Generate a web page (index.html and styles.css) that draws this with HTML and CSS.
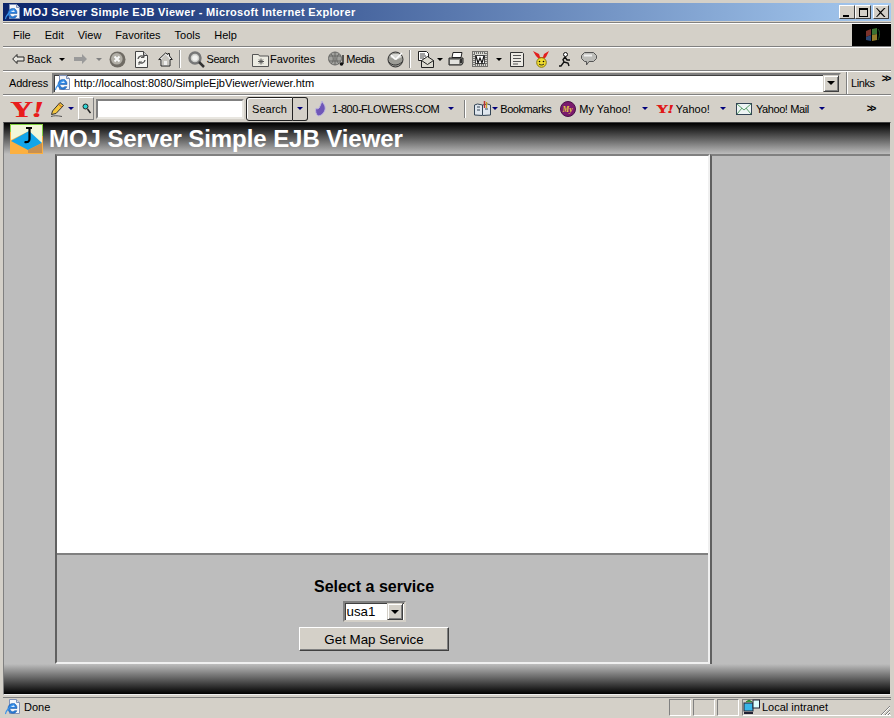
FILE: index.html
```html
<!doctype html>
<html lang="en">
<head>
<meta charset="utf-8">
<title>MOJ Server Simple EJB Viewer - Microsoft Internet Explorer</title>
<link rel="stylesheet" href="styles.css">
</head>
<body>
<svg class="defs" width="0" height="0">
  <symbol id="ie" viewBox="0 0 16 16">
    <path d="M4.500.5h7l3 3v11h-10z" fill="#f4f6fa" stroke="#8092b8"/>
    <path d="M11.500.5v3h3" fill="#cfd8e8" stroke="#8092b8"/>
    <path d="M3 9.500h9c.3-3-1.600-5-4.300-5C5 4.500 3 6.700 3 9.500c0 2.800 2 4.800 4.800 4.800 2 0 3.400-.9 4.100-2.600H9.500c-.4.700-1 1-1.800 1-1.300 0-2.200-.9-2.300-2.200" fill="#2a7fdc" stroke="#17509c" stroke-width=".5"/>
    <path d="M5.400 8h4.400c-.1-1.200-1-2-2.200-2s-2 .8-2.200 2z" fill="#dcecff"/>
    <path d="M.8 15c-1-1.500 3-7 9-10.500" fill="none" stroke="#3a93ea" stroke-width="1.200"/>
  </symbol>
</svg>
<div class="window">
  <div class="titlebar">
    <svg class="ic16" width="16" height="16"><use href="#ie"/></svg>
    <span class="title">MOJ Server Simple EJB Viewer - Microsoft Internet Explorer</span>
    <span class="caps">
      <span class="cap"><i class="cap-min"></i></span><span class="cap"><i class="cap-max"></i></span><span class="cap cap-close"><svg width="10" height="9"><path d="M1 0l3.500 3.500L8 0h1.500L5.300 4.500 9.500 9H8L4.500 5.500 1 9H0l3.700-4.500L0 0z" fill="#000"/></svg></span>
    </span>
  </div>

  <div class="bar menubar">
    <div class="menu">
      <span>File</span><span>Edit</span><span>View</span><span>Favorites</span><span>Tools</span><span>Help</span>
    </div>
    <div class="flag">
      <svg class="flag-mark" width="18" height="16"><path d="M3 4l5-2v6l-5 2z" fill="#a5433a"/><path d="M3 10l5-2v6l-5-1z" fill="#3b5f9c"/><path d="M9 2l5-1v6l-5 1z" fill="#4f9a45"/><path d="M9 8l5-1v6l-5 1z" fill="#c9a93a"/><path d="M15 2c2 2 2 7 0 11" fill="none" stroke="#2c6a30"/></svg>
    </div>
  </div>

  <div class="bar toolbar">
    <svg class="i" style="margin-left:9px" width="13" height="10"><path d="M5 .5L.7 5 5 9.500V7h7V3H5z" fill="#e8e6e0" stroke="#222"/></svg>
    <span class="lbl" style="margin-left:2px">Back</span>
    <i class="drop" style="margin-left:8px"></i>
    <svg class="i" style="margin-left:9px" width="13" height="10"><path d="M8 0l5 5-5 5V7H0V3h8z" fill="#9a9a9a"/></svg>
    <i class="drop drop-off" style="margin-left:9px"></i>
    <svg class="i" style="margin-left:7px" width="17" height="17"><circle cx="8.500" cy="8.500" r="8" fill="#6f6b64"/><circle cx="7.800" cy="7.800" r="5.800" fill="#b3b0a8"/><path d="M5.500 5.500l5 5m0-5l-5 5" stroke="#f8f8f8" stroke-width="2"/></svg>
    <svg class="i" style="margin-left:8px" width="15" height="17"><path d="M1.500.5h8l4 4v12h-12z" fill="#f5f5f2" stroke="#444"/><path d="M9.500.5v4h4" fill="#ccc" stroke="#444"/><path d="M4 8a3.500 3.500 0 016-2m1 3a3.500 3.500 0 01-6 2" fill="none" stroke="#555" stroke-width="1.300"/><path d="M10 3.500v3H7M5 14v-3h3" fill="none" stroke="#555"/></svg>
    <svg class="i" style="margin-left:9px" width="15" height="15"><path d="M7.500 1L.7 7.500h2.300v6.500h9V7.500h2.300L11.500 4V1.500H10V2.500z" fill="#eee" stroke="#222"/><path d="M7.500 2.500L4 6v7h2V9h3v4h2V6z" fill="#c8c6c0"/></svg>
    <i class="sep" style="margin-left:6px"></i>
    <svg class="i" style="margin-left:7px" width="17" height="17"><circle cx="7" cy="7" r="5.500" fill="#cfd0cc" stroke="#777" stroke-width="2.400"/><circle cx="7" cy="7" r="2.800" fill="#f2f2f0"/><path d="M11 11l5 5" stroke="#333" stroke-width="2.500"/></svg>
    <span class="lbl tight" style="margin-left:1px">Search</span>
    <svg class="i" style="margin-left:13px" width="17" height="15"><path d="M.5 2.500h6l1 1.500h9v10.500H.5z" fill="#ecebe2" stroke="#555"/><path d="M9 6.500v6M6 9.500h6M7 7.500l4 4m0-4l-4 4" stroke="#555"/></svg>
    <span class="lbl" style="margin-left:1px">Favorites</span>
    <svg class="i" style="margin-left:13px" width="17" height="17"><circle cx="7" cy="7.500" r="6.500" fill="#a2a29e" stroke="#6a6a68"/><path d="M1 5h12M1 10h12M7 1v13M3 3c3 3 3 7 0 10M11 3c-3 3-3 7 0 10" fill="none" stroke="#5e5e5c" stroke-width=".8"/><path d="M15 4v9" stroke="#111" stroke-width="1.300"/><circle cx="13.500" cy="13" r="1.800" fill="#111"/></svg>
    <span class="lbl tight" style="margin-left:1px">Media</span>
    <svg class="i" style="margin-left:13px" width="17" height="17"><circle cx="8.500" cy="8.500" r="7.500" fill="#9c9c96" stroke="#333"/><path d="M3 6l3-3 6 0 3 3-6 3z" fill="#d8d8d4"/><path d="M8.500 8.500L4 4M8.500 8.500L15 2" stroke="#fff" stroke-width="1.500"/><path d="M2 11c3 4 9 4 13 0" stroke="#333" fill="none"/></svg>
    <i class="sep" style="margin-left:5px"></i>
    <svg class="i" style="margin-left:6px" width="18" height="17"><path d="M1.500.5h8l2 2v7h-10z" fill="#fff" stroke="#222"/><path d="M3 3h5M3 5h6M3 7h4" stroke="#444"/><path d="M4.500 16.500v-7l6-4 6 4v7z" fill="#dcdad0" stroke="#222"/><path d="M4.500 9.500l6 4 6-4" fill="none" stroke="#222"/></svg>
    <i class="drop" style="margin-left:2px"></i>
    <svg class="i" style="margin-left:5px" width="16" height="14"><path d="M5 .5h9l-1 5H4z" fill="#fff" stroke="#222"/><path d="M1 6h14v5l-1.500 2H1z" fill="#8e8e8a" stroke="#222"/><path d="M2 8h9v4H2z" fill="#e2e2de"/><path d="M13 7v4" stroke="#111" stroke-width="1.500"/></svg>
    <svg class="i" style="margin-left:8px" width="16" height="16"><rect x=".5" y=".5" width="15" height="15" fill="#d8d8d2" stroke="#111" stroke-dasharray="1 1"/><rect x="2" y="2" width="12" height="12" fill="none" stroke="#111" stroke-dasharray="1 1"/><rect x="3.500" y="4.500" width="9" height="8" fill="#fff" stroke="#444"/><path d="M4 5l2 7 2-5 2 5 2-7" fill="none" stroke="#111" stroke-width="1.200"/></svg>
    <i class="drop" style="margin-left:8px"></i>
    <svg class="i" style="margin-left:8px" width="14" height="15"><path d="M.5.500h12l1 1v13H.5z" fill="#eceae4" stroke="#333"/><path d="M3 3.500h8M3 6.500h8M3 9.500h8M3 12h5" stroke="#555"/></svg>
    <svg class="i" style="margin-left:9px" width="16" height="17"><path d="M0 0l6 3 1 3h3l1-3 5-3-3 6-2 2-5 0-3-3z" fill="#e31f1f"/><circle cx="8.500" cy="11.500" r="4.800" fill="#f0dc2e" stroke="#8a7a10"/><circle cx="6.500" cy="10.500" r=".8"/><circle cx="10.500" cy="10.500" r=".8"/><path d="M6 13c1.500 1.300 3.500 1.300 5 0" fill="none" stroke="#222"/></svg>
    <svg class="i" style="margin-left:10px" width="12" height="15"><circle cx="6.500" cy="2.500" r="2" fill="#fff" stroke="#111"/><path d="M6 5L4 7.500 5 10l-3 4h-2M6 5l2 3 3 0M5 10l4 1 1 3" fill="none" stroke="#111" stroke-width="1.400"/></svg>
    <svg class="i" style="margin-left:10px" width="16" height="14"><path d="M.5 3.500l3-3h9l3 3v3l-3 3H8L5.500 13V9.500H3.500l-3-3z" fill="#bdbdb9" stroke="#555"/><path d="M3 3.500h8" stroke="#eee" stroke-width="2"/></svg>
  </div>

  <div class="bar addressbar">
    <span class="lbl addr-lbl">Address</span>
    <div class="addr-box">
      <svg class="ic16" width="16" height="16"><use href="#ie"/></svg>
      <span class="url">http://localhost:8080/SimpleEjbViewer/viewer.htm</span>
      <span class="combo-btn"><i class="combo-arrow"></i></span>
    </div>
    <div class="links"><span class="lbl tight">Links</span><span class="chev chev-up">&gt;&gt;</span></div>
  </div>

  <div class="bar yahoobar">
    <span class="y-logo">Y<em>!</em></span>
    <svg class="i" style="margin-left:8px" width="14" height="16"><path d="M2.500 10L10 1.500l3.500 3L6 12.500l-4.500 1z" fill="#f4c63e" stroke="#333"/><path d="M8.500 3.200l3.500 3" stroke="#c05a20"/><path d="M1 15.500c3-1 6-1 11 0" fill="none" stroke="#555"/></svg>
    <i class="drop drop-blue" style="margin-left:4px"></i>
    <span class="y-find"><svg width="9" height="11"><circle cx="3.500" cy="3.500" r="2.500" fill="#2fd4d4" stroke="#222"/><path d="M5.500 6l3 4" stroke="#222" stroke-width="1.500"/></svg></span>
    <div class="y-input"></div>
    <span class="y-search">Search</span>
    <span class="y-split"><i class="drop drop-blue"></i></span>
    <svg class="i" style="margin-left:5px" width="15" height="17"><path d="M9 1c1 3 4 4 3 9-1 3-4 6-7 6-2-2-3-4-2-8 1 1 2 1 3 0 1-2 2-4 3-7z" fill="#6f57b8" stroke="#c0b8e0"/></svg>
    <span class="lbl caps-tight" style="margin-left:4px">1-800-FLOWERS.COM</span>
    <i class="drop drop-blue" style="margin-left:9px"></i>
    <i class="sep" style="margin-left:10px"></i>
    <svg class="i" style="margin-left:8px" width="17" height="15"><path d="M.5 4l3-1 5 1 5-1 3 1v10l-8 .5-8-.5z" fill="#dfe6ee" stroke="#345"/><path d="M8.500 4v10M3 6h3M3 9h3M11 8h3" stroke="#345"/><path d="M10.500 0v7" stroke="#b33" stroke-width="1.500"/><path d="M12.500 1v6" stroke="#c89a20" stroke-width="1.300"/></svg>
    <i class="drop drop-blue" style="margin-left:1px"></i>
    <span class="lbl caps-tight" style="margin-left:2px">Bookmarks</span>
    <svg class="i" style="margin-left:9px" width="16" height="16"><circle cx="8" cy="8" r="7.500" fill="#7a1a6e" stroke="#4a1048"/><text class="my" x="2.500" y="11">My</text></svg>
    <span class="lbl" style="margin-left:3px">My Yahoo!</span>
    <i class="drop drop-blue" style="margin-left:11px"></i>
    <span class="y-mini" style="margin-left:8px">Y<em>!</em></span>
    <span class="lbl" style="margin-left:4px">Yahoo!</span>
    <i class="drop drop-blue" style="margin-left:10px"></i>
    <svg class="i" style="margin-left:10px" width="16" height="12"><rect x=".5" y=".5" width="15" height="11" fill="#eef4f4" stroke="#345"/><path d="M1 1l7 6 7-6M1 11l5-6m9 6l-5-6" fill="none" stroke="#5aa06a"/></svg>
    <span class="lbl tight" style="margin-left:4px">Yahoo! Mail</span>
    <i class="drop drop-blue" style="margin-left:10px"></i>
    <span class="chev chev-end">&gt;&gt;</span>
  </div>

  <div class="page">
    <div class="banner">
      <svg class="moj" width="33" height="30">
        <rect width="33" height="30" fill="#fcb040"/>
        <path d="M1 1h31v18L17 8 1 16z" fill="#f2f6d8"/>
        <path d="M1 17L19 7l13 12-14 7z" fill="#12a5ea"/>
        <path d="M18 26l14-7v10H18z" fill="#c89050"/>
        <path d="M16 4h6M19.500 4v11c0 3-2 3.500-5 3" fill="none" stroke="#000" stroke-width="2.200"/>
        <path d="M.5 8V.5h32V12" fill="none" stroke="#7fd040"/>
      </svg>
      <span class="heading">MOJ Server Simple EJB Viewer</span>
    </div>
    <div class="frames">
      <div class="side"></div>
      <div class="main">
        <div class="map"></div>
        <div class="form">
          <div class="select-title">Select a service</div>
          <div class="select"><span class="select-val">usa1</span><span class="combo-btn"><i class="combo-arrow"></i></span></div>
          <div class="go">Get Map Service</div>
        </div>
      </div>
      <div class="right"></div>
    </div>
    <div class="footer"></div>
  </div>

  <div class="status">
    <svg class="ic16" width="16" height="16"><use href="#ie"/></svg>
    <span class="lbl done">Done</span>
    <span class="cell"></span><span class="cell"></span><span class="cell"></span>
    <span class="cell zone">
      <svg class="ic16" width="17" height="16"><rect x="1" y="4" width="9" height="8" fill="#39b6e8" stroke="#223"/><rect x="10" y="1" width="6.500" height="8" fill="#dff" stroke="#223"/><path d="M1 14h9" stroke="#223" stroke-width="2"/><path d="M3 3l3-2 3 2" fill="#3a9a3a" stroke="#2a7a2a"/></svg>
      <span class="lbl">Local intranet</span>
    </span>
    <svg class="grip" width="11" height="11"><path d="M10 1L1 10M10 5l-5 5M10 8l-2 2" stroke="#808080"/><path d="M10 2l-8 8M10 6l-4 4M10 9l-1 1" stroke="#fff"/></svg>
  </div>
</div>
</body>
</html>
```

FILE: styles.css
```css
* { box-sizing: border-box; }
html, body { margin: 0; height: 100%; }
body {
  background: #d4d0c8;
  font-family: "Liberation Sans", Arial, sans-serif;
  font-size: 11px;
  color: #000;
  overflow: hidden;
}
.defs { position: absolute; }
.window {
  height: 718px;
  padding: 3px 3px 0;
  display: flex;
  flex-direction: column;
}
.lbl { white-space: nowrap; }
.tight { letter-spacing: -0.4px; }
.caps-tight { letter-spacing: -0.45px; }
.i, .ic16 { flex: none; display: block; }

.titlebar {
  height: 18px;
  flex: none;
  display: flex;
  align-items: center;
  padding: 0 2px;
  background: linear-gradient(to right, #0a246a, #a6caf0);
}
.title { margin-left: 2px; color: #fff; font-weight: bold; letter-spacing: 0.33px; }
.caps { margin-left: auto; display: flex; }
.cap {
  width: 16px;
  height: 14px;
  background: #d4d0c8;
  border: 1px solid;
  border-color: #fff #404040 #404040 #fff;
  display: flex;
  align-items: center;
  justify-content: center;
}
.cap-close { margin-left: 2px; }
.cap-min { width: 6px; height: 2px; background: #000; margin-top: 7px; margin-right: 3px; }
.cap-max { width: 9px; height: 9px; border: 1px solid #000; border-top-width: 2px; }

.bar {
  flex: none;
  display: flex;
  align-items: center;
  border-top: 1px solid #fff;
  box-shadow: 0 -1px 0 #808080;
}
.menubar { height: 23px; margin-top: 2px; }
.menu { display: flex; gap: 14px; padding-left: 10px; }
.flag {
  margin-left: auto;
  width: 39px;
  height: 22px;
  background: #000;
  display: flex;
  align-items: center;
  justify-content: center;
}
.flag-mark { opacity: 0.75; }
.toolbar, .addressbar { height: 23px; margin-top: 1px; }
.yahoobar { height: 26px; margin-top: 1px; }

.drop {
  display: block;
  flex: none;
  width: 0;
  height: 0;
  border-left: 3px solid transparent;
  border-right: 3px solid transparent;
  border-top: 3px solid #000;
}
.drop-off { border-top-color: #808080; }
.drop-blue { border-top-color: #00007b; }
.sep {
  display: block;
  flex: none;
  width: 2px;
  height: 18px;
  border-left: 1px solid #808080;
  border-right: 1px solid #fff;
}

.addr-lbl { margin-left: 6px; letter-spacing: -0.2px; }
.addr-box {
  width: 789px;
  height: 21px;
  margin-left: 4px;
  display: flex;
  align-items: center;
  background: #fff;
  border: 2px solid;
  border-color: #808080 #d4d0c8 #d4d0c8 #808080;
  box-shadow: inset 1px 1px 0 #404040;
  padding-left: 1px;
}
.url { margin-left: 3px; }
.combo-btn {
  margin-left: auto;
  width: 16px;
  height: 17px;
  background: #d4d0c8;
  border: 1px solid;
  border-color: #d4d0c8 #404040 #404040 #d4d0c8;
  box-shadow: inset 1px 1px 0 #fff, inset -1px -1px 0 #808080;
  display: flex;
  align-items: center;
  justify-content: center;
}
.combo-arrow {
  width: 0;
  height: 0;
  border-left: 4px solid transparent;
  border-right: 4px solid transparent;
  border-top: 4px solid #000;
}
.links {
  margin-left: 5px;
  height: 22px;
  flex: 1;
  border-left: 1px solid #808080;
  box-shadow: inset 1px 0 0 #fff;
  padding-left: 4px;
  display: flex;
  align-items: center;
}
.chev { font-weight: bold; font-size: 10px; line-height: 1; letter-spacing: -2px; }
.chev-up { margin: -8px 0 0 7px; }
.chev-end { margin-left: 42px; }

.y-logo {
  margin-left: 7px;
  width: 32px;
  color: #e81c1c;
  font: bold 24px/1 "Liberation Serif", serif;
  letter-spacing: -1px;
  text-shadow: 0.6px 0 0 #e81c1c;
  transform: scaleX(1.3);
  transform-origin: left center;
}
.y-logo em, .y-mini em { font-style: italic; }
.y-find {
  margin-left: 4px;
  width: 16px;
  height: 23px;
  display: flex;
  align-items: center;
  justify-content: center;
  border: 1px solid;
  border-color: #fff #808080 #808080 #fff;
}
.y-input {
  margin-left: 2px;
  width: 148px;
  height: 20px;
  background: #fff;
  border: 2px solid;
  border-color: #808080 #e8e6e0 #e8e6e0 #808080;
}
.y-search {
  margin-left: 2px;
  width: 47px;
  height: 24px;
  display: flex;
  align-items: center;
  justify-content: center;
  border: 1px solid #222;
  border-radius: 3px 0 0 3px;
  box-shadow: inset 1px 1px 0 #fff;
}
.y-split {
  width: 15px;
  height: 24px;
  display: flex;
  align-items: center;
  justify-content: center;
  border: 1px solid #222;
  border-left: 0;
  border-radius: 0 3px 3px 0;
}
.my { font: italic bold 7.5px "Liberation Serif", serif; fill: #e8d040; }
.y-mini {
  width: 16px;
  color: #e01818;
  font: bold 13px/1 "Liberation Serif", serif;
  letter-spacing: -1px;
  text-shadow: 0.4px 0.4px 0 #e01818;
  transform: scaleX(1.3);
  transform-origin: left center;
}

.page {
  flex: 1;
  margin-top: 1px;
  display: flex;
  flex-direction: column;
  background: #bdbdbd;
  border: 1px solid;
  border-color: #404040 #d4d0c8 #f0f0f0 #808080;
  min-height: 0;
}
.banner {
  height: 31px;
  flex: none;
  display: flex;
  align-items: center;
  padding-left: 6px;
  background: linear-gradient(to bottom, #000, #bdbdbd);
}
.moj { flex: none; }
.heading {
  margin-left: 6px;
  color: #fff;
  font-size: 24px;
  font-weight: bold;
  letter-spacing: -0.07px;
  white-space: nowrap;
}
.frames { flex: 1; display: flex; min-height: 0; }
.side { width: 51px; flex: none; }
.main {
  width: 655px;
  flex: none;
  display: flex;
  flex-direction: column;
  border: 2px solid;
  border-color: #808080 #f0f0f0 #f0f0f0 #606060;
}
.map { height: 399px; flex: none; background: #fff; border-bottom: 2px solid #808080; }
.form {
  flex: 1;
  display: flex;
  flex-direction: column;
  align-items: center;
  padding: 23px 17px 0 0;
}
.select-title { font-size: 16px; font-weight: bold; line-height: 18px; }
.select {
  margin-top: 5px;
  width: 63px;
  height: 21px;
  padding-right: 1px;
  display: flex;
  align-items: center;
  background: #fff;
  border: 2px solid;
  border-color: #808080 #d4d0c8 #d4d0c8 #808080;
  box-shadow: inset 1px 1px 0 #404040;
  font-size: 13.33px;
}
.select-val { margin-left: 2px; }
.go {
  margin-top: 5px;
  width: 150px;
  height: 24px;
  display: flex;
  align-items: center;
  justify-content: center;
  background: #d4d0c8;
  border: 1px solid;
  border-color: #fff #404040 #404040 #fff;
  box-shadow: inset -1px -1px 0 #808080;
  font-size: 13.33px;
}
.right {
  flex: 1;
  border-top: 2px solid #808080;
  border-left: 2px solid #606060;
}
.footer {
  height: 30px;
  flex: none;
  background: linear-gradient(to bottom, #bdbdbd, #000);
}

.status {
  height: 21px;
  margin-top: 2px;
  flex: none;
  display: flex;
  align-items: center;
  padding: 0 0 2px 2px;
  border-top: 1px solid #808080;
  position: relative;
}
.done { margin-left: 3px; width: 645px; }
.cell {
  width: 22px;
  height: 17px;
  margin-right: 2px;
  border: 1px solid;
  border-color: #808080 #fff #fff #808080;
  display: flex;
  align-items: center;
}
.zone { flex: 1; width: auto; margin: 0 0 0 1px; border-right: 0; gap: 2px; }
.grip { position: absolute; right: 0; bottom: 2px; }
```
